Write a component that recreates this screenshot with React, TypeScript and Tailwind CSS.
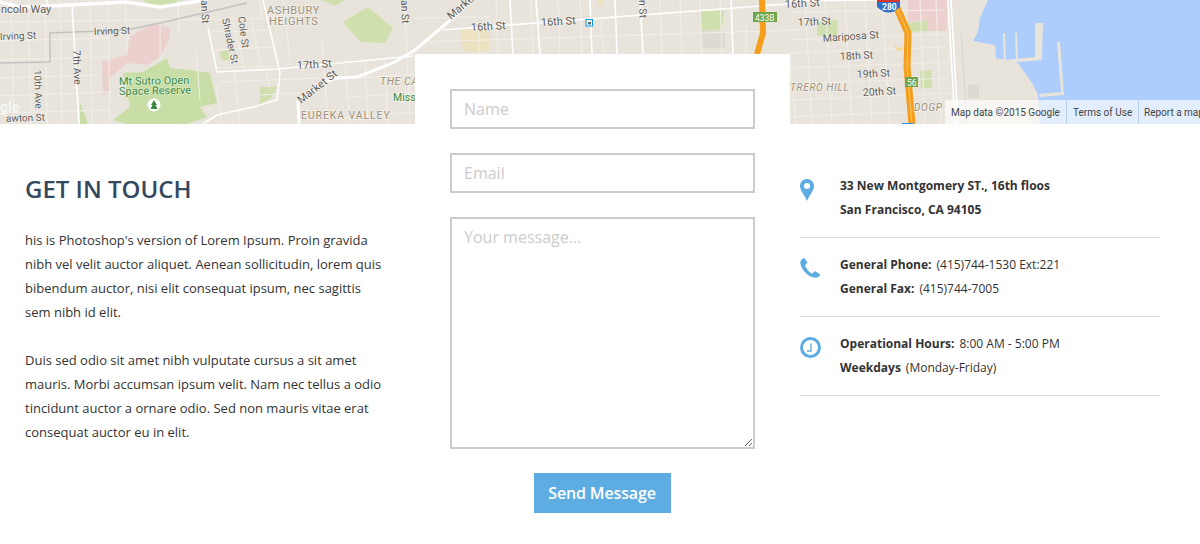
import React from "react";

const font = { fontFamily: '"Open Sans", "Noto Sans", sans-serif' };

type L = { t: string; x: number; y: number; r?: number; s?: number; c?: string; sp?: number; i?: boolean };

const vertical: number[][] = [
  [11, 0, 14, 124], [28, 0, 31, 124], [45, 0, 47, 124], [60, 0, 62, 124], [90, 0, 92, 124], [108, 0, 110, 124],
  [125, 0, 127, 55], [160, 20, 160, 60], [178, 0, 179, 35], [196, 50, 200, 100], [216, 85, 222, 124], [234, 70, 240, 124],
  [260, 0, 262, 20], [232, 20, 245, 70], [250, 15, 262, 70], [266, 70, 270, 90], [283, 0, 290, 60], [322, 40, 328, 124],
  [345, 60, 350, 124], [365, 60, 368, 124], [385, 60, 388, 124], [405, 0, 410, 124],
  [478, 30, 480, 54], [496, 0, 498, 54], [531, 0, 533, 54], [558, 0, 560, 54], [580, 0, 582, 54], [600, 20, 604, 54],
  [660, 0, 662, 54], [680, 0, 682, 54], [700, 0, 702, 54], [720, 0, 722, 54], [746, 20, 746, 54],
  [790, 60, 796, 124], [805, 0, 812, 124], [825, 0, 832, 124], [845, 0, 852, 124], [865, 0, 872, 124], [882, 0, 890, 124],
  [920, 0, 925, 124], [936, 0, 941, 124],
];

const horizontal: number[][] = [
  [0, 22, 300, 18], [0, 41, 108, 38], [0, 60, 110, 57], [0, 78, 100, 75], [0, 96, 110, 92], [0, 113, 110, 110],
  [210, 32, 270, 30], [215, 50, 275, 47], [215, 68, 275, 66], [220, 82, 320, 78], [260, 95, 300, 93], [330, 80, 415, 74],
  [340, 98, 415, 92], [340, 118, 415, 112], [420, 42, 800, 30], [415, 18, 490, 17], [790, 68, 950, 62], [790, 84, 950, 78],
  [790, 100, 950, 93], [790, 117, 950, 110], [790, 12, 945, 10], [790, 40, 945, 34], [790, 53, 945, 47],
];

const white: string[] = [
  "M208 28 L217 72 L277 69 L413 56",
  "M263 0 L280 73 L277 100 L253 107 L217 115 L203 124",
  "M72 5 L79 124",
  "M0 2 L20 7 L50 6 L125 2 L160 7 L207 0",
  "M513 54 L510 0", "M540 54 L536 0", "M592 54 L590 0", "M617 54 L615 0", "M643 54 L640 0", "M733 54 L731 0",
  "M443 30 L800 3",
  "M790 1 L880 0",
  "M948 0 L955 124",
  "M951 0 L958 124",
];

const labels: L[] = [
  { t: "ncoln Way", x: 1, y: 13, s: 11 },
  { t: "Irving St", x: 0, y: 40, s: 10, r: -2 },
  { t: "Irving St", x: 94, y: 35, s: 10, r: -2 },
  { t: "7th Ave", x: 73, y: 50, s: 10.5, r: 88 },
  { t: "10th Ave", x: 34, y: 70, s: 10, r: 88 },
  { t: "awton St", x: 6, y: 122, s: 10, r: -2 },
  { t: "an St", x: 201, y: 0, s: 10.5, r: 88 },
  { t: "Shrader St", x: 222, y: 19, s: 10, r: 78 },
  { t: "Cole St", x: 238, y: 17, s: 10, r: 82 },
  { t: "17th St", x: 297, y: 69, s: 11, r: -3 },
  { t: "Market St", x: 301, y: 104, s: 11, r: -38 },
  { t: "Mt Sutro Open", x: 119, y: 85, s: 11, c: "#3b8a3e", r: -1 },
  { t: "Space Reserve", x: 119, y: 95, s: 11, c: "#3b8a3e", r: -1 },
  { t: "ASHBURY", x: 267, y: 14, s: 11, c: "#a09078", sp: 0.6 },
  { t: "HEIGHTS", x: 269, y: 25, s: 11, c: "#a09078", sp: 0.6 },
  { t: "THE CA", x: 380, y: 85, s: 10.5, c: "#a09078", sp: 0.6, i: true },
  { t: "Miss", x: 393, y: 101, s: 10.5, c: "#3b8a3e" },
  { t: "EUREKA VALLEY", x: 301, y: 119, s: 10.5, c: "#a09078", sp: 0.9 },
  { t: "an St", x: 401, y: 0, s: 10.5, r: 88 },
  { t: "Marke", x: 451, y: 20, s: 11, r: -40 },
  { t: "16th St", x: 471, y: 31, s: 11, r: -3 },
  { t: "16th St", x: 541, y: 26, s: 11, r: -3 },
  { t: "n St", x: 639, y: 0, s: 10.5, r: 88 },
  { t: "16th St", x: 785, y: 8, s: 11, r: -3 },
  { t: "17th St", x: 798, y: 26, s: 10.5, r: -3 },
  { t: "Mariposa St", x: 823, y: 42, s: 10.5, r: -4 },
  { t: "18th St", x: 840, y: 60, s: 10.5, r: -3 },
  { t: "19th St", x: 857, y: 78, s: 10.5, r: -3 },
  { t: "20th St", x: 863, y: 96, s: 10.5, r: -3 },
  { t: "TRERO HILL", x: 790, y: 91, s: 10, c: "#a09078", sp: 0.7, i: true },
  { t: "DOGP", x: 914, y: 111, s: 10, c: "#a09078", sp: 0.7, i: true },
];

function MapArt() {
  return (
    <svg width="1200" height="124" viewBox="0 0 1200 124" className="block" style={{ fontFamily: "Roboto, sans-serif" }}>
      <rect width="1200" height="124" fill="#e8e4dc" />
      <path d="M143 0 L183 0 L165 7 L150 6 Z" fill="#cfe0ae" />
      <path d="M320 0 L345 0 L335 6 Z" fill="#cfe0ae" />
      <path d="M343 22 L368 7 L393 28 L385 43 L360 42 Z" fill="#cfe0ae" />
      <path d="M272 98 L277 87 L260 87 L260 104 Z" fill="#cfe0ae" />
      <path d="M220 52 L228 50 L230 60 L221 60 Z" fill="#cfe0ae" />
      <path d="M102 62 L127 55 L130 37 L153 23 L170 28 L170 38 L160 57 L147 65 L127 63 L108 80 L110 92 L103 95 Z" fill="#ecd0cd" />
      <path d="M127 124 L113 120 L130 107 L123 73 L143 72 L167 58 L170 68 L190 70 L210 73 L217 103 L200 107 L207 117 L187 124 Z" fill="#c9dea6" />
      <path d="M80 102 L88 124 L80 124 Z" fill="#c9dea6" />
      <path d="M460 28 L490 30 L489 52 L463 52 Z" fill="#ece2c2" />
      <path d="M700 10 L724 11 L722 30 L702 30 Z" fill="#cfe0ae" />
      <path d="M701 30 L725 31 L725 48 L702 48 Z" fill="#dedad2" />
      <path d="M598 0 L604 0 L604 6 L598 6 Z" fill="#ece2c2" />
      <path d="M817 22 L838 20 L837 36 L818 36 Z" fill="#cfe0ae" />
      <path d="M906 23 L929 20 L928 31 L907 32 Z" fill="#cfe0ae" />
      <path d="M908 0 L947 0 L947 31 L928 31 L928 20 L908 22 Z" fill="#ecd0cd" />
      <path d="M920 71 L931 70 L932 88 L921 88 Z" fill="#cfe0ae" />
      <path d="M968 85 L979 85 L979 98 L968 98 Z" fill="#dedad2" />

      {vertical.map((v, i) => (
        <line key={i} x1={v[0]} y1={v[1]} x2={v[2]} y2={v[3]} stroke="#f2efe9" strokeWidth="1" />
      ))}
      {horizontal.map((v, i) => (
        <line key={i} x1={v[0]} y1={v[1]} x2={v[2]} y2={v[3]} stroke="#f2efe9" strokeWidth="1" />
      ))}

      <path d="M0 63 L50 62 L50 33 L127 30 L160 23 L247 3" fill="none" stroke="#c2c2c2" strokeWidth="1.5" />
      {white.map((d, i) => (
        <path key={i} d={d} fill="none" stroke="#ffffff" strokeWidth={i === 3 ? 3.5 : 1.6} />
      ))}
      <path d="M47 0 L48 5" stroke="#ffffff" strokeWidth="1.5" />
      <path d="M299 124 L298 101 L320 83 L337 78 L357 77 L393 63 L415 50 L447 23 L473 0" fill="none" stroke="#ffffff" strokeWidth="3" />
      <path d="M961 30 L967 124" fill="none" stroke="#d8d5cf" strokeWidth="1" />

      <path
        d="M988 0 L1200 0 L1200 124 L1040 124 L1038 95 L1032 83 L1018 63 L1005 60 L996 58 L995 45 L973 41 L978 32 L980 18 Z"
        fill="#adcdfd"
      />
      <path d="M1003 33 L1005 33 L1006 62 L1004 62 Z" fill="#e8e4dc" />
      <path d="M1015 33 L1017 33 L1018 60 L1016 60 Z" fill="#e8e4dc" />
      <path d="M1035 23 L1043 23 L1042 60 L1006 63 L1005 60 L1035 57 Z" fill="#e8e4dc" />
      <path d="M1057 42 L1060 42 L1064 95 L1040 97 L1039 94 L1061 92 Z" fill="#e8e4dc" />

      <path d="M762 0 L763 33 L757 54" fill="none" stroke="#f59e1c" strokeWidth="6" />
      <path d="M897 8 L908 33 L907 67 L912 124" fill="none" stroke="#f59e1c" strokeWidth="7" />
      <path d="M897 8 L908 33 L907 67 L912 124" fill="none" stroke="#f9c56f" strokeWidth="1" />
      <path d="M895 46 L898 50 L903 48" fill="none" stroke="#f5d78e" strokeWidth="2" />

      {labels.map((l, i) => (
        <text
          key={i}
          x={l.x}
          y={l.y}
          fontSize={l.s}
          fill={l.c ?? "#5f5c57"}
          letterSpacing={l.sp}
          fontStyle={l.i ? "italic" : undefined}
          transform={l.r ? `rotate(${l.r} ${l.x} ${l.y})` : undefined}
          stroke="#ffffff"
          strokeOpacity="0.45"
          strokeWidth="1.5"
          paintOrder="stroke"
        >
          {l.t}
        </text>
      ))}

      <circle cx="154" cy="105" r="6.5" fill="#ffffff" />
      <path d="M154 100 L157 105 L155.500 105 L157.500 109 L150.500 109 L152.500 105 L151 105 Z" fill="#3c8a3f" />

      <rect x="753" y="12" width="24" height="10" fill="#6ea44a" />
      <text x="755" y="20.500" fontSize="8.500" fill="#ffffff">433B</text>
      <rect x="905" y="77" width="13" height="10" fill="#6ea44a" />
      <text x="907" y="85.500" fontSize="8.500" fill="#ffffff">56</text>
      <path d="M877 0 L900 0 L900 7 Q889 18 877 7 Z" fill="#2f6fc6" />
      <rect x="877" y="0" width="23" height="2" fill="#d8382e" />
      <text x="882" y="10" fontSize="8.500" fontWeight="700" fill="#ffffff">280</text>
      <rect x="586" y="19.500" width="6.500" height="6.500" fill="#ffffff" stroke="#0b97e0" strokeWidth="1" />
      <rect x="588" y="22" width="3" height="2.500" fill="#5f6a72" />
      <rect x="902" y="123" width="11" height="1" fill="#2f8fdc" />
      <text x="0" y="112" fontSize="14" fontWeight="700" fill="#ffffff" fillOpacity="0.7">gle</text>
    </svg>
  );
}

const Bold = ({ children }: { children: React.ReactNode }) => <strong className="font-bold mr-[5px]">{children}</strong>;

function InfoRow({ icon, first, second }: { icon: React.ReactNode; first: React.ReactNode; second: React.ReactNode }) {
  return (
    <div className="flex border-b border-[#dddddd] pt-[15px] pb-[15px]">
      <div className="w-[40px] shrink-0 pt-[5px]">{icon}</div>
      <div className="text-[12px] leading-[24px] text-[#333333]">
        <div>{first}</div>
        <div>{second}</div>
      </div>
    </div>
  );
}

export default function App() {
  return (
    <div className="w-[1200px] h-[544px] bg-white overflow-hidden" style={font}>
      <div className="relative h-[124px]">
        <MapArt />
        <div className="absolute right-0 bottom-0 h-[24px] w-[255px] flex items-center text-[10px] text-[#444444] bg-white/65" style={{ fontFamily: "Roboto, sans-serif" }}>
          <span className="w-[121px] pl-[6px]">Map data ©2015 Google</span>
          <span className="w-[72px] h-full flex items-center pl-[6px] border-l border-[#b7cdf2]">Terms of Use</span>
          <span className="flex-1 h-full flex items-center pl-[5px] border-l border-[#b7cdf2] whitespace-nowrap overflow-hidden">Report a map</span>
        </div>
      </div>

      <div className="flex items-start">
        <div className="w-[415px] pl-[25px] pr-[32px] pt-[48px] text-[#333333]">
          <h2 className="text-[24px] leading-[34px] font-semibold text-[#34495e] mb-[22px]">GET IN TOUCH</h2>
          <p className="text-[13px] leading-[24px] mb-[24px]">
            his is Photoshop's version of Lorem Ipsum. Proin gravida nibh vel velit auctor aliquet. Aenean sollicitudin, lorem quis bibendum auctor, nisi elit consequat ipsum, nec sagittis sem nibh id elit.
          </p>
          <p className="text-[13px] leading-[24px]">
            Duis sed odio sit amet nibh vulputate cursus a sit amet mauris. Morbi accumsan ipsum velit. Nam nec tellus a odio tincidunt auctor a ornare odio. Sed non mauris vitae erat consequat auctor eu in elit.
          </p>
        </div>

        <form className="relative w-[375px] -mt-[70px] bg-white pt-[35px] pl-[35px] pr-[35px] flex flex-col gap-[24px]">
          <input
            placeholder="Name"
            className="w-[305px] h-[40px] border-2 border-[#cccccc] px-[12px] text-[16px] outline-none placeholder:text-[#cccccc]"
          />
          <input
            placeholder="Email"
            className="w-[305px] h-[40px] border-2 border-[#cccccc] px-[12px] text-[16px] outline-none placeholder:text-[#cccccc]"
          />
          <textarea
            placeholder="Your message..."
            className="block w-[305px] h-[232px] border-2 border-[#cccccc] px-[12px] py-[6px] text-[16px] outline-none placeholder:text-[#cccccc]"
          />
          <button
            type="button"
            className="self-center ml-[-1px] w-[137px] h-[40px] bg-[#5dade2] text-white text-[16px] font-semibold tracking-[-0.15px]"
          >
            Send Message
          </button>
        </form>

        <div className="w-[360px] ml-[10px] pt-[35px]">
          <InfoRow
            icon={
              <svg width="14" height="22" viewBox="0 0 14 22">
                <path fillRule="evenodd" fill="#5dade2" d="M7 0 C3 0 0 3 0 7 C0 11.500 4.500 16 7 22 C9.500 16 14 11.500 14 7 C14 3 11 0 7 0 Z M7 4 A3 3 0 1 1 7 10 A3 3 0 1 1 7 4 Z" />
              </svg>
            }
            first={<strong className="font-bold">33 New Montgomery ST., 16th floos</strong>}
            second={<strong className="font-bold">San Francisco, CA 94105</strong>}
          />
          <InfoRow
            icon={
              <svg width="20" height="20" viewBox="0 0 20 20">
                <path fill="#5dade2" d="M3.500 0.300 C2 1 0.200 2.500 0.300 5 C0.700 11 8 19.500 15.500 19.800 C17.500 19.900 19.200 18.800 19.900 17.300 C20.100 16.700 19.900 16.300 19.500 16 L15.800 13.600 C15.200 13.200 14.700 13.300 14.200 13.700 L12.600 15.200 C12.100 15.600 11.700 15.500 11.200 15.200 C8.500 13.500 6.500 10.500 5.300 7.900 C5.100 7.400 5.100 7 5.500 6.600 L6.900 5.200 C7.300 4.800 7.300 4.300 7 3.800 L5 0.700 C4.600 0.200 4.100 0.100 3.500 0.300 Z" />
              </svg>
            }
            first={<><Bold>General Phone:</Bold>(415)744-1530 Ext:221</>}
            second={<><Bold>General Fax:</Bold>(415)744-7005</>}
          />
          <InfoRow
            icon={
              <svg width="21" height="21" viewBox="0 0 21 21">
                <circle cx="10.500" cy="10.500" r="9" fill="none" stroke="#5dade2" strokeWidth="3" />
                <path d="M11 6.500 L11 14 L7 14" fill="none" stroke="#5dade2" strokeWidth="1.300" />
              </svg>
            }
            first={<><Bold>Operational Hours:</Bold>8:00 AM - 5:00 PM</>}
            second={<><Bold>Weekdays</Bold>(Monday-Friday)</>}
          />
        </div>
      </div>
    </div>
  );
}
